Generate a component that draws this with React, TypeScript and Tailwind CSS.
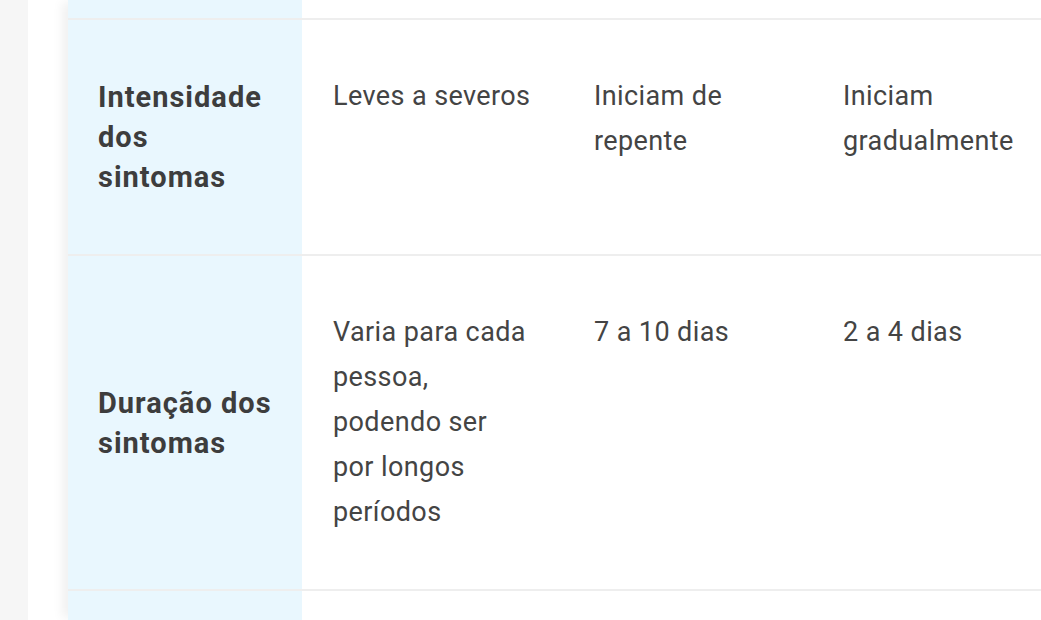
const rows = [
    {
        title: 'Intensidade dos sintomas',
        cells: ['Leves a severos', 'Iniciam de repente', 'Iniciam gradualmente'],
        height: 'h-[236px]',
    },
    {
        title: 'Duração dos sintomas',
        cells: [
            'Varia para cada pessoa, podendo ser por longos períodos',
            '7 a 10 dias',
            '2 a 4 dias',
        ],
        height: 'h-[335px]',
    },
];

export default function App() {
    return (
        <div
            className="flex h-[620px] w-[1041px] overflow-hidden bg-white"
            style={{ fontFamily: 'Roboto, "Noto Sans", sans-serif' }}
        >
            <div className="w-[28px] shrink-0 bg-[#f6f6f6]" />
            <div className="w-[40px] shrink-0 bg-white" />
            <div className="relative flex-1 overflow-hidden shadow-[-8px_0_10px_-2px_rgba(0,0,0,0.06)]">
                <table className="w-[1000px] table-fixed border-collapse">
                    <colgroup>
                        <col className="w-[234px]" />
                        <col className="w-[261px]" />
                        <col className="w-[249px]" />
                        <col className="w-[256px]" />
                    </colgroup>
                    <tbody>
                        <tr className="h-[19px]">
                            <td className="bg-[#e9f7fe]" />
                            <td />
                            <td />
                            <td />
                        </tr>
                        {rows.map((row) => (
                            <tr
                                key={row.title}
                                className={`${row.height} border-t-2 border-[#eeeeee]`}
                            >
                                <td className="bg-[#e9f7fe] px-[30px] align-middle text-[29px] leading-[40px] font-bold tracking-[1px] text-[#3d3d3d]">
                                    {row.title}
                                </td>
                                {row.cells.map((cell, i) => (
                                    <td
                                        key={i}
                                        className="px-[31px] pt-[54px] align-top text-[27px] leading-[45px] tracking-[0.4px] text-[#444444]"
                                    >
                                        {cell}
                                    </td>
                                ))}
                            </tr>
                        ))}
                        <tr className="h-[40px] border-t-2 border-[#eeeeee]">
                            <td className="bg-[#e9f7fe]" />
                            <td />
                            <td />
                            <td />
                        </tr>
                    </tbody>
                </table>
            </div>
        </div>
    );
}
